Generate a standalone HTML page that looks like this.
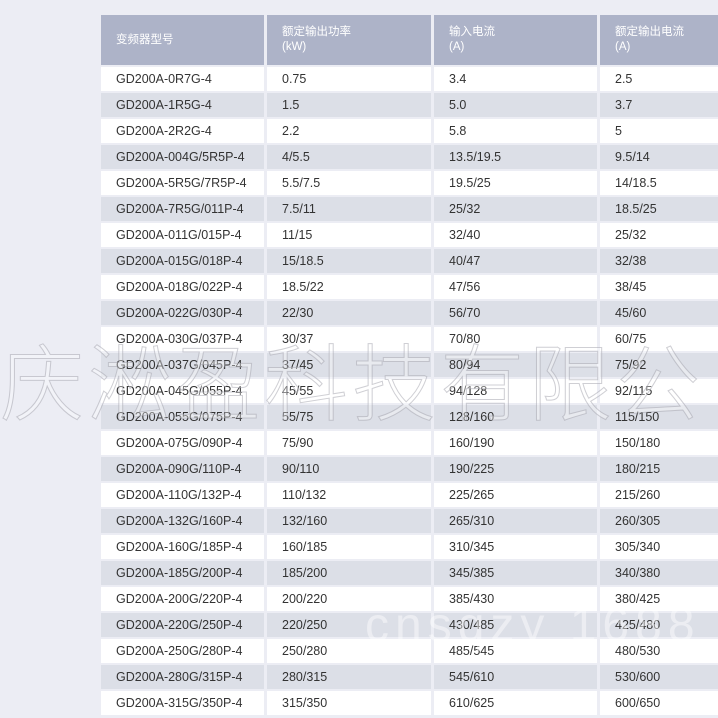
<!DOCTYPE html><html><head><meta charset="utf-8"><style>
body{margin:0;width:718px;height:718px;background:#ecedf4;overflow:hidden;position:relative;font-family:"Liberation Sans","Noto Sans CJK SC",sans-serif}
.t{position:absolute;left:101px;top:15px}
.r{display:flex;height:24px;margin-bottom:2px}
.c{height:100%;margin-right:3px;box-sizing:border-box;padding-left:15px;font-size:12.5px;color:#333;line-height:25px;flex:none}
.c1{width:163px}.c2{width:164px}.c3{width:163px}.c4{width:200px}
.r.w .c{background:#fff}.r.g .c{background:#dcdfe7}
.h{height:50px;margin-bottom:2px}.h .c{background:#adb3c8;color:#fff;font-size:11.5px;line-height:15px;padding-top:10px}
.wm{position:absolute;left:0;top:318px;font-size:84px;color:rgba(255,255,255,0.35);-webkit-text-stroke:1px rgba(160,160,170,0.5);white-space:nowrap;letter-spacing:4px;font-family:"Noto Sans CJK SC",sans-serif;font-weight:300}
.wm2{position:absolute;left:365px;top:598px;font-size:48px;color:rgba(255,255,255,0.45);white-space:nowrap;letter-spacing:6px}
</style></head><body>
<div class="t">
<div class="r h"><div class="c c1" style="padding-top:18px">变频器型号</div><div class="c c2">额定输出功率<br>(kW)</div><div class="c c3">输入电流<br>(A)</div><div class="c c4">额定输出电流<br>(A)</div></div>
<div class="r w"><div class="c c1">GD200A-0R7G-4</div><div class="c c2">0.75</div><div class="c c3">3.4</div><div class="c c4">2.5</div></div>
<div class="r g"><div class="c c1">GD200A-1R5G-4</div><div class="c c2">1.5</div><div class="c c3">5.0</div><div class="c c4">3.7</div></div>
<div class="r w"><div class="c c1">GD200A-2R2G-4</div><div class="c c2">2.2</div><div class="c c3">5.8</div><div class="c c4">5</div></div>
<div class="r g"><div class="c c1">GD200A-004G/5R5P-4</div><div class="c c2">4/5.5</div><div class="c c3">13.5/19.5</div><div class="c c4">9.5/14</div></div>
<div class="r w"><div class="c c1">GD200A-5R5G/7R5P-4</div><div class="c c2">5.5/7.5</div><div class="c c3">19.5/25</div><div class="c c4">14/18.5</div></div>
<div class="r g"><div class="c c1">GD200A-7R5G/011P-4</div><div class="c c2">7.5/11</div><div class="c c3">25/32</div><div class="c c4">18.5/25</div></div>
<div class="r w"><div class="c c1">GD200A-011G/015P-4</div><div class="c c2">11/15</div><div class="c c3">32/40</div><div class="c c4">25/32</div></div>
<div class="r g"><div class="c c1">GD200A-015G/018P-4</div><div class="c c2">15/18.5</div><div class="c c3">40/47</div><div class="c c4">32/38</div></div>
<div class="r w"><div class="c c1">GD200A-018G/022P-4</div><div class="c c2">18.5/22</div><div class="c c3">47/56</div><div class="c c4">38/45</div></div>
<div class="r g"><div class="c c1">GD200A-022G/030P-4</div><div class="c c2">22/30</div><div class="c c3">56/70</div><div class="c c4">45/60</div></div>
<div class="r w"><div class="c c1">GD200A-030G/037P-4</div><div class="c c2">30/37</div><div class="c c3">70/80</div><div class="c c4">60/75</div></div>
<div class="r g"><div class="c c1">GD200A-037G/045P-4</div><div class="c c2">37/45</div><div class="c c3">80/94</div><div class="c c4">75/92</div></div>
<div class="r w"><div class="c c1">GD200A-045G/055P-4</div><div class="c c2">45/55</div><div class="c c3">94/128</div><div class="c c4">92/115</div></div>
<div class="r g"><div class="c c1">GD200A-055G/075P-4</div><div class="c c2">55/75</div><div class="c c3">128/160</div><div class="c c4">115/150</div></div>
<div class="r w"><div class="c c1">GD200A-075G/090P-4</div><div class="c c2">75/90</div><div class="c c3">160/190</div><div class="c c4">150/180</div></div>
<div class="r g"><div class="c c1">GD200A-090G/110P-4</div><div class="c c2">90/110</div><div class="c c3">190/225</div><div class="c c4">180/215</div></div>
<div class="r w"><div class="c c1">GD200A-110G/132P-4</div><div class="c c2">110/132</div><div class="c c3">225/265</div><div class="c c4">215/260</div></div>
<div class="r g"><div class="c c1">GD200A-132G/160P-4</div><div class="c c2">132/160</div><div class="c c3">265/310</div><div class="c c4">260/305</div></div>
<div class="r w"><div class="c c1">GD200A-160G/185P-4</div><div class="c c2">160/185</div><div class="c c3">310/345</div><div class="c c4">305/340</div></div>
<div class="r g"><div class="c c1">GD200A-185G/200P-4</div><div class="c c2">185/200</div><div class="c c3">345/385</div><div class="c c4">340/380</div></div>
<div class="r w"><div class="c c1">GD200A-200G/220P-4</div><div class="c c2">200/220</div><div class="c c3">385/430</div><div class="c c4">380/425</div></div>
<div class="r g"><div class="c c1">GD200A-220G/250P-4</div><div class="c c2">220/250</div><div class="c c3">430/485</div><div class="c c4">425/480</div></div>
<div class="r w"><div class="c c1">GD200A-250G/280P-4</div><div class="c c2">250/280</div><div class="c c3">485/545</div><div class="c c4">480/530</div></div>
<div class="r g"><div class="c c1">GD200A-280G/315P-4</div><div class="c c2">280/315</div><div class="c c3">545/610</div><div class="c c4">530/600</div></div>
<div class="r w"><div class="c c1">GD200A-315G/350P-4</div><div class="c c2">315/350</div><div class="c c3">610/625</div><div class="c c4">600/650</div></div>
</div>
<div class="wm">庆淞盈科技有限公</div>
<div class="wm2">cnsqzy 1688</div>
</body></html>
